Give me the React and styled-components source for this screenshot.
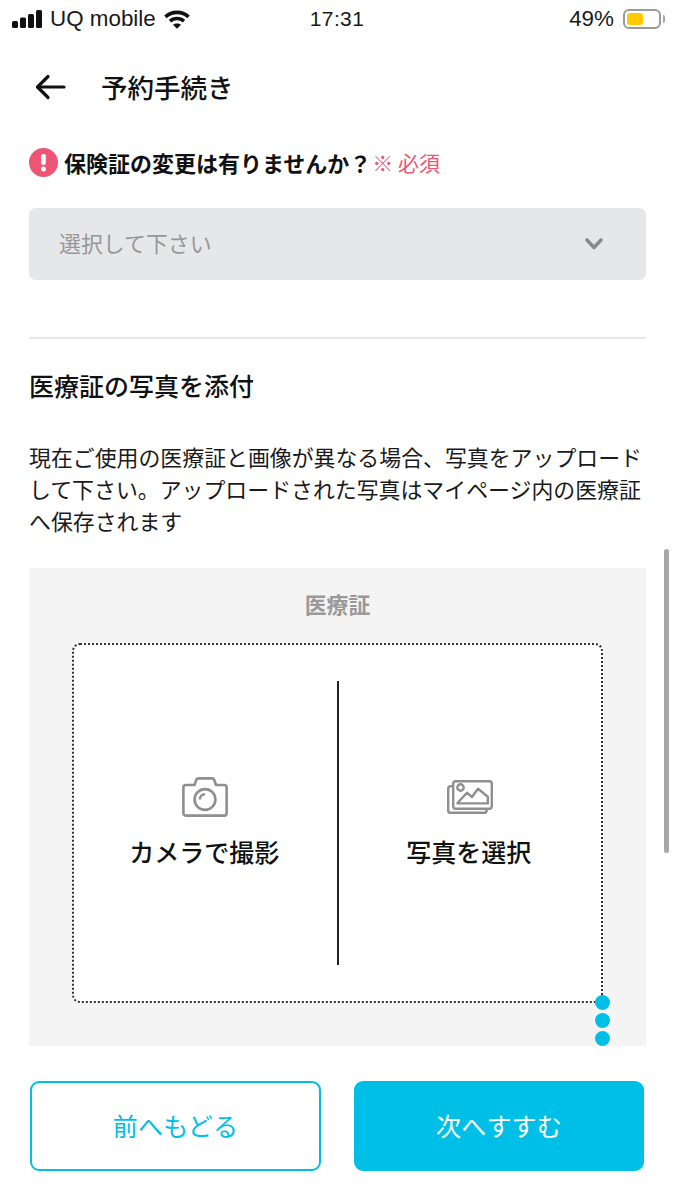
import React from "react";
import styled, { createGlobalStyle } from "styled-components";

const JP = `"Noto Sans CJK JP", "Noto Sans", sans-serif`;

const Global = createGlobalStyle`
  html, body { margin: 0; padding: 0; background: #fff; }
  body { font-family: ${JP}; color: #111; }
  * { box-sizing: border-box; }
`;

const Page = styled.div`
  position: relative;
  width: 675px;
  height: 1200px;
  overflow: hidden;
  background: #fff;
`;

const StatusBar = styled.div`
  height: 38px;
  padding: 0 11px 0 12px;
  display: grid;
  grid-template-columns: 1fr auto 1fr;
  align-items: center;
  font-family: "Liberation Sans", sans-serif;
  font-size: 22.4px;
  color: #1a1a1a;
`;
const StatusLeft = styled.div`
  display: flex;
  align-items: center;
  gap: 8px;
`;
const StatusRight = styled.div`
  display: flex;
  align-items: center;
  justify-content: flex-end;
  gap: 9px;
`;
const Clock = styled.div`
  margin-right: 2px;
  font-size: 21px;
  font-weight: 500;
  letter-spacing: 0.4px;
`;
const Battery = styled.div`
  position: relative;
  width: 38px;
  height: 20px;
  margin-right: 3px;
  border: 2px solid #9a9a9a;
  border-radius: 6px;
  padding: 2px;
  &::after {
    content: "";
    position: absolute;
    right: -6px;
    top: 4px;
    width: 2px;
    height: 8px;
    border-radius: 0 2px 2px 0;
    background: #a5a5a5;
  }
`;
const BatteryFill = styled.div`
  width: 16px;
  height: 100%;
  border-radius: 3px;
  background: #fecb00;
`;

const Header = styled.header`
  height: 74px;
  margin-top: 12px;
  padding: 0 0 0 35px;
  display: flex;
  align-items: center;
  gap: 35px;
`;
const Title = styled.h1`
  margin: 0;
  font-size: 26.5px;
  font-weight: 500;
  line-height: 1;
`;

const Content = styled.main`
  padding: 0 29px;
`;

const Question = styled.div`
  height: 32px;
  margin-top: 22px;
  display: flex;
  align-items: center;
  gap: 6px;
`;
const QuestionText = styled.span`
  font-size: 22px;
  font-weight: 700;
  white-space: nowrap;
`;
const Required = styled.span`
  margin-left: -5px;
  font-size: 21px;
  color: #ee5575;
  white-space: nowrap;
`;

const Select = styled.div`
  height: 72px;
  margin-top: 30px;
  padding: 0 42px 0 30px;
  display: flex;
  align-items: center;
  justify-content: space-between;
  background: #e6e7e9;
  border-radius: 7px;
  font-size: 21.9px;
  color: #979797;
`;
const SelectText = styled.span`
  margin-bottom: 3px;
`;

const Divider = styled.hr`
  margin: 57px 0 0;
  border: 0;
  height: 2px;
  background: #e6e7e9;
`;

const SectionTitle = styled.h2`
  margin: 28px 0 0;
  font-size: 25px;
  font-weight: 500;
  line-height: 36px;
`;

const Body = styled.p`
  margin: 38px 0 0;
  font-size: 21.9px;
  line-height: 32px;
  width: 617px;
  color: #1a1a1a;
`;

const Card = styled.section`
  position: relative;
  height: 478px;
  margin-top: 31px;
  padding-top: 21px;
  background: #f4f4f4;
  display: flex;
  flex-direction: column;
  align-items: center;
`;
const CardLabel = styled.div`
  font-size: 21.8px;
  font-weight: 700;
  line-height: 30px;
  color: #999;
`;
const DropZone = styled.div`
  width: 531px;
  height: 360px;
  margin-top: 24px;
  background: #fff;
  border: 2px dotted #333;
  border-radius: 8px;
  display: grid;
  grid-template-columns: 1fr 2px 1fr;
  align-items: center;
`;
const Option = styled.div`
  display: flex;
  flex-direction: column;
  align-items: center;
  gap: 16px;
  padding-right: 2px;
  font-size: 25px;
  font-weight: 500;
  line-height: 36px;
  color: #111;
`;
const IconSlot = styled.div`
  height: 40px;
  margin-left: 2px;
  display: flex;
  align-items: center;
`;
const VLine = styled.div`
  width: 2px;
  height: 284px;
  background: #222;
`;
const Handles = styled.div`
  position: absolute;
  left: 566px;
  top: 427px;
  display: flex;
  flex-direction: column;
  gap: 3px;
`;
const Dot = styled.span`
  width: 15px;
  height: 15px;
  border-radius: 50%;
  background: #00bfe7;
`;

const Footer = styled.footer`
  margin-top: 35px;
  padding: 0 31px 0 30px;
  display: grid;
  grid-template-columns: 291px 290px;
  justify-content: space-between;
`;
const Button = styled.div`
  height: 90px;
  padding-bottom: 3px;
  display: flex;
  align-items: center;
  justify-content: center;
  border-radius: 9px;
  border: 2px solid #00bfe7;
  font-size: 25px;
  font-weight: 400;
  letter-spacing: 0.2px;
  color: ${(p) => (p.$primary ? "#fff" : "#00bfe7")};
  background: ${(p) => (p.$primary ? "#00bfe7" : "#fff")};
`;

const ScrollBar = styled.div`
  position: absolute;
  left: 664px;
  top: 549px;
  width: 5px;
  height: 304px;
  border-radius: 3px;
  background: #a8a8a8;
`;

const Signal = () => (
  <svg width="30" height="18" viewBox="0 0 30 18" fill="#111">
    <rect x="0" y="11" width="6" height="7" rx="1.5" />
    <rect x="8" y="7.5" width="6" height="10.5" rx="1.5" />
    <rect x="16" y="4" width="6" height="14" rx="1.5" />
    <rect x="24" y="0" width="6" height="18" rx="1.5" />
  </svg>
);

const Wifi = () => (
  <svg width="26" height="19" viewBox="0 0 26 19" fill="none" stroke="#111" strokeWidth="3.6">
    <path d="M1.4 6.8 C8 0.9 18 0.9 24.6 6.8" />
    <path d="M6 11.2 C10 7.6 16 7.6 20 11.2" />
    <path d="M13 18.8 L9 14.7 C11.2 13 14.8 13 17 14.7 Z" fill="#111" stroke="none" />
  </svg>
);

const BackArrow = () => (
  <svg width="31" height="26" viewBox="0 0 31 26" fill="none" stroke="#111" strokeWidth="3.2" strokeLinecap="round" strokeLinejoin="round">
    <path d="M29 13 H3" />
    <path d="M13 2.5 L2.5 13 L13 23.5" />
  </svg>
);

const AlertIcon = () => (
  <svg width="29" height="29" viewBox="0 0 29 29">
    <circle cx="14.5" cy="14.5" r="14.5" fill="#ee5575" />
    <rect x="12.2" y="6" width="4.6" height="11" rx="2" fill="#fff" />
    <circle cx="14.5" cy="21" r="2.5" fill="#fff" />
  </svg>
);

const Chevron = () => (
  <svg width="20" height="14" viewBox="0 0 20 14" fill="none" stroke="#8a8a8a" strokeWidth="3.6" strokeLinecap="round" strokeLinejoin="round">
    <path d="M3 3 L10 10.5 L17 3" />
  </svg>
);

const CameraIcon = () => (
  <svg width="46" height="40" viewBox="0 0 46 40" fill="none" stroke="#8f8f8f" strokeWidth="2.6" strokeLinejoin="round">
    <path d="M3.8 8 H12.5 L14.2 3 Q14.8 1.4 16.5 1.4 H30 Q31.7 1.4 32.3 3 L34 8 H42.2 Q44.6 8 44.6 10.4 V36 Q44.6 38.6 42.2 38.6 H3.8 Q1.4 38.6 1.4 36 V10.4 Q1.4 8 3.8 8 Z" />
    <circle cx="23" cy="22.5" r="10.4" />
    <path d="M17.8 22.5 A5.4 5.4 0 0 1 23 17.2" />
  </svg>
);

const PhotosIcon = () => (
  <svg width="46" height="34" viewBox="0 0 46 34" fill="none" stroke="#8f8f8f" strokeWidth="2.4" strokeLinejoin="round">
    <rect x="6.2" y="1.2" width="38.6" height="27.6" rx="2.5" />
    <path d="M6.2 6.2 H3.6 Q1.2 6.2 1.2 8.6 V30.4 Q1.2 32.8 3.6 32.8 H37 Q39.6 32.8 39.6 30.4 V28.8" />
    <circle cx="13.5" cy="7.5" r="3.2" />
    <path d="M10.5 23 L20 12.7 L25 17 L31 8.7 L40.8 16.7 V23.4 H10.5 Z" />
  </svg>
);

export default function App() {
  return (
    <Page>
      <Global />
      <StatusBar>
        <StatusLeft>
          <Signal />
          <span>UQ mobile</span>
          <Wifi />
        </StatusLeft>
        <Clock>17:31</Clock>
        <StatusRight>
          <span>49%</span>
          <Battery>
            <BatteryFill />
          </Battery>
        </StatusRight>
      </StatusBar>
      <Header>
        <BackArrow />
        <Title>予約手続き</Title>
      </Header>
      <Content>
        <Question>
          <AlertIcon />
          <QuestionText>保険証の変更は有りませんか？</QuestionText>
          <Required>※ 必須</Required>
        </Question>
        <Select>
          <SelectText>選択して下さい</SelectText>
          <Chevron />
        </Select>
        <Divider />
        <SectionTitle>医療証の写真を添付</SectionTitle>
        <Body>
          現在ご使用の医療証と画像が異なる場合、写真をアップロードして下さい。アップロードされた写真はマイページ内の医療証へ保存されます
        </Body>
        <Card>
          <CardLabel>医療証</CardLabel>
          <DropZone>
            <Option>
              <IconSlot>
                <CameraIcon />
              </IconSlot>
              <span>カメラで撮影</span>
            </Option>
            <VLine />
            <Option>
              <IconSlot>
                <PhotosIcon />
              </IconSlot>
              <span>写真を選択</span>
            </Option>
          </DropZone>
          <Handles>
            <Dot />
            <Dot />
            <Dot />
          </Handles>
        </Card>
      </Content>
      <Footer>
        <Button>前へもどる</Button>
        <Button $primary>次へすすむ</Button>
      </Footer>
      <ScrollBar />
    </Page>
  );
}
